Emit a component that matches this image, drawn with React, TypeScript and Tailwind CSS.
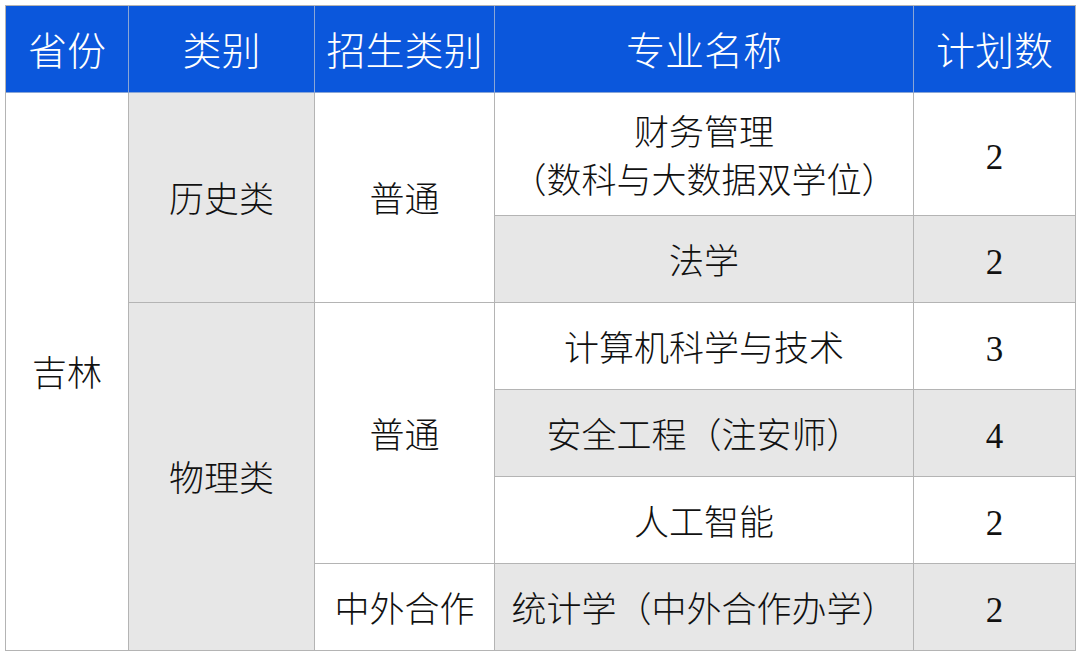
const font = { fontFamily: '"Liberation Serif", "Noto Sans CJK SC", serif' };

type CellProps = {
  children?: React.ReactNode;
  className: string;
  gray?: boolean;
};

function Cell({ children, className, gray }: CellProps) {
  return (
    <div
      className={`flex flex-col items-center justify-center border-r border-b border-[#b4b4b4] pt-[7px] text-center text-[35px] leading-[48px] font-light text-[#111] [text-spacing-trim:space-all] ${
        gray ? "bg-[#e7e7e7]" : "bg-white"
      } ${className}`}
    >
      {children}
    </div>
  );
}

function Head({ children, className }: { children: React.ReactNode; className: string }) {
  return (
    <div
      className={`flex items-center justify-center border-r border-b border-[#8aa6d6] bg-[#0b57dc] pt-[6px] text-[39px] font-light text-white ${className}`}
    >
      {children}
    </div>
  );
}

export default function App() {
  return (
    <div className="h-[656px] w-[1080px] bg-white pl-[5px] pt-[5px]" style={font}>
      <div className="grid w-[1071px] grid-cols-[123px_186px_180px_419px_162px] grid-rows-[87px_123px_87px_87px_87px_87px_87px] border-t border-l border-[#b4b4b4]">
        <Head className="col-start-1 row-start-1">省份</Head>
        <Head className="col-start-2 row-start-1">类别</Head>
        <Head className="col-start-3 row-start-1">招生类别</Head>
        <Head className="col-start-4 row-start-1">专业名称</Head>
        <Head className="col-start-5 row-start-1 border-r-[#b4b4b4]">计划数</Head>

        <Cell className="col-start-1 row-start-2 row-span-6">吉林</Cell>

        <Cell gray className="col-start-2 row-start-2 row-span-2">历史类</Cell>
        <Cell className="col-start-3 row-start-2 row-span-2">普通</Cell>
        <Cell className="col-start-4 row-start-2">
          <span>财务管理</span>
          <span>（数科与大数据双学位）</span>
        </Cell>
        <Cell className="col-start-5 row-start-2">2</Cell>
        <Cell gray className="col-start-4 row-start-3">法学</Cell>
        <Cell gray className="col-start-5 row-start-3">2</Cell>

        <Cell gray className="col-start-2 row-start-4 row-span-4">物理类</Cell>
        <Cell className="col-start-3 row-start-4 row-span-3">普通</Cell>
        <Cell className="col-start-4 row-start-4">计算机科学与技术</Cell>
        <Cell className="col-start-5 row-start-4">3</Cell>
        <Cell gray className="col-start-4 row-start-5">安全工程（注安师）</Cell>
        <Cell gray className="col-start-5 row-start-5">4</Cell>
        <Cell className="col-start-4 row-start-6">人工智能</Cell>
        <Cell className="col-start-5 row-start-6">2</Cell>
        <Cell className="col-start-3 row-start-7">中外合作</Cell>
        <Cell gray className="col-start-4 row-start-7">统计学（中外合作办学）</Cell>
        <Cell gray className="col-start-5 row-start-7">2</Cell>
      </div>
    </div>
  );
}
